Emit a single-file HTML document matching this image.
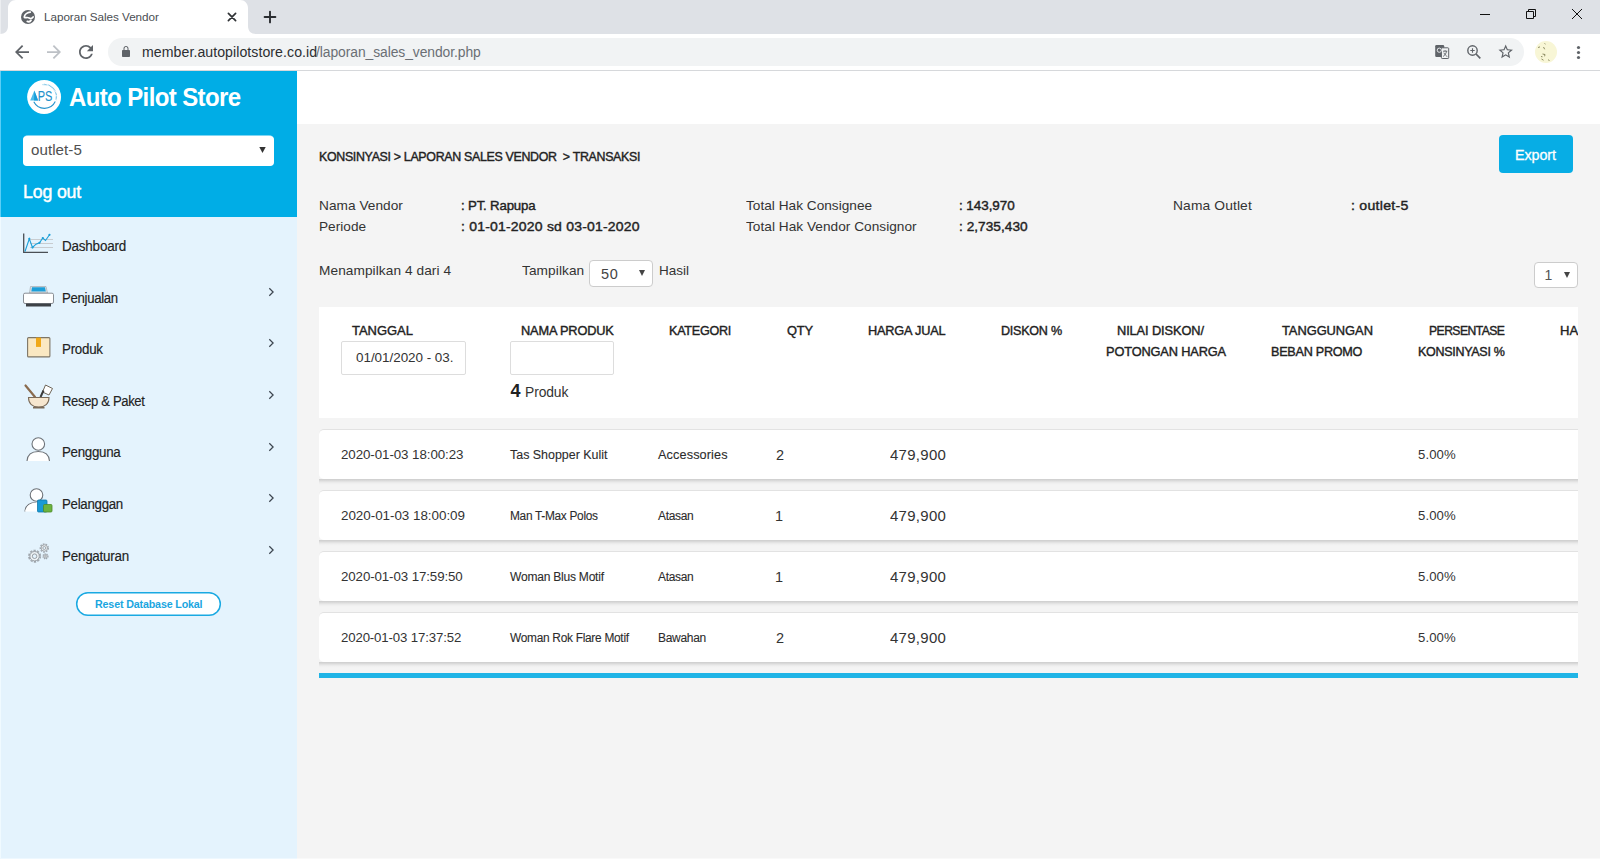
<!DOCTYPE html>
<html lang="id">
<head>
<meta charset="utf-8">
<title>Laporan Sales Vendor</title>
<style>
html,body{margin:0;padding:0}
body{width:1600px;height:859px;overflow:hidden;position:relative;background:#f4f4f4;font-family:"Liberation Sans",sans-serif}
.t{position:absolute;white-space:pre;transform-origin:0 0;font-family:"Liberation Sans",sans-serif}
.b{position:absolute;box-sizing:border-box}
svg{position:absolute;overflow:visible}
</style>
</head>
<body>
<div class="b" style="left:0;top:0;width:1600px;height:34px;background:#dee1e6;border-left:1px solid #eceef1"></div>
<div class="b" style="left:0;top:34px;width:1600px;height:37px;background:#fff;border-bottom:1px solid #d6d8db"></div>
<svg style="left:0;top:0" width="270" height="34" viewBox="0 0 270 34"><path d="M0 34 C5 34 8 31 8 26 L8 8 C8 3.5 11.5 0 16 0 L240 0 C244.5 0 248 3.5 248 8 L248 26 C248 31 251 34 256 34 Z" fill="#fff"/></svg>
<svg style="left:21px;top:10px" width="14" height="14" viewBox="0 0 14 14"><circle cx="7" cy="7" r="7" fill="#5f6368"/><path d="M9.300 2.100 C6.500 2.300 3.600 4.200 3.300 6.900 C3.200 8.200 4.800 7.600 6.200 7.500 C7.800 7.400 8.400 8.600 9.800 8.500 C11 8.400 11.800 7.600 12.200 6.900" stroke="#fff" stroke-width="1.700" stroke-linecap="round" fill="none"/><path d="M6.300 11.400 C7.500 11.900 9.300 11.500 10 10.300" stroke="#fff" stroke-width="1.800" stroke-linecap="round" fill="none"/></svg>
<span class="t" style="left:44.00px;top:10px;font-size:11.8px;line-height:14px;font-weight:400;color:#4a4e52;letter-spacing:-0.05px;transform:scaleX(0.9922);">Laporan Sales Vendor</span>
<svg style="left:227px;top:12px" width="10" height="10" viewBox="0 0 10 10"><path d="M1.400 1.400 L8.600 8.600 M8.600 1.400 L1.400 8.600" stroke="#303336" stroke-width="1.700" stroke-linecap="round" fill="none"/></svg>
<svg style="left:264px;top:11px" width="12" height="12" viewBox="0 0 12 12"><path d="M6 0.600 V11.400 M0.600 6 H11.400" stroke="#2a2d31" stroke-width="1.900" stroke-linecap="round" fill="none"/></svg>
<svg style="left:1479px;top:8px" width="110" height="12" viewBox="0 0 110 12"><path d="M1 6.5 H11" stroke="#111" stroke-width="1" fill="none"/><path d="M47.500 3.500 H54.500 V10.500 H47.500 Z M49.500 3.500 V1.500 H56.500 V8.500 H54.500" stroke="#111" stroke-width="1" fill="none"/><path d="M93 1 L103 11 M103 1 L93 11" stroke="#111" stroke-width="1" fill="none"/></svg>
<svg style="left:15px;top:45px" width="14" height="14" viewBox="4 4 16 16"><path fill="#5f6368" d="M20 11H7.830l5.590-5.590L12 4l-8 8 8 8 1.410-1.410L7.830 13H20v-2z"/></svg>
<svg style="left:47px;top:45px" width="14" height="14" viewBox="4 4 16 16"><path fill="#bdc1c6" d="M12 4l-1.410 1.410L16.170 11H4v2h12.170l-5.580 5.590L12 20l8-8z"/></svg>
<svg style="left:79px;top:45px" width="14" height="14" viewBox="4 4 16 16"><path fill="#5f6368" d="M17.650 6.350C16.200 4.900 14.210 4 12 4c-4.420 0-7.990 3.580-7.990 8s3.570 8 7.990 8c3.730 0 6.840-2.550 7.730-6h-2.080c-.82 2.330-3.040 4-5.650 4-3.310 0-6-2.690-6-6s2.690-6 6-6c1.660 0 3.140.69 4.220 1.780L13 11h7V4l-2.350 2.350z"/></svg>
<div class="b" style="left:108px;top:38px;width:1416px;height:28px;border-radius:14px;background:#f1f3f4"></div>
<svg style="left:120px;top:44.500px" width="12" height="14" viewBox="0 0 24 28"><path fill="#5f6368" d="M18 10h-1V7c0-2.760-2.240-5-5-5S7 4.240 7 7v3H6c-1.100 0-2 .9-2 2v10c0 1.100.9 2 2 2h12c1.100 0 2-.9 2-2V12c0-1.100-.9-2-2-2zM9 7c0-1.660 1.340-3 3-3s3 1.340 3 3v3H9V7z"/></svg>
<span class="t" style="left:142.00px;top:44px;font-size:14px;line-height:17px;font-weight:400;color:#2c2e31;letter-spacing:0.06px;transform:scaleX(1.0090);">member.autopilotstore.co.id</span>
<span class="t" style="left:316.00px;top:44px;font-size:14px;line-height:17px;font-weight:400;color:#6a6f74;letter-spacing:-0.07px;transform:scaleX(0.9900);">/laporan_sales_vendor.php</span>
<svg style="left:1435px;top:45px" width="16" height="15" viewBox="0 0 16 15"><rect x="0.200" y="0" width="9" height="12" rx="1.200" fill="#5f6368"/><rect x="6.400" y="2.800" width="7.300" height="10.700" rx="0.800" fill="#f1f3f4" stroke="#5f6368" stroke-width="1"/><path d="M8 6.200 H12.300 M10.100 5.200 V6.200 M11.600 6.200 C11.100 8.700 9.500 10.700 8.200 11.400 M8.900 7.700 C9.600 9.400 11 10.900 12.300 11.500" stroke="#5f6368" stroke-width="0.9" fill="none"/><circle cx="4.300" cy="5.200" r="2.100" fill="none" stroke="#e8eaed" stroke-width="1"/></svg>
<svg style="left:1466px;top:44px" width="16" height="16" viewBox="0 0 16 16"><circle cx="6.500" cy="6.500" r="4.700" fill="none" stroke="#5f6368" stroke-width="1.400"/><path d="M10 10 L14.300 14.300" stroke="#5f6368" stroke-width="1.700" fill="none"/><path d="M4.300 6.500 H8.700 M6.500 4.300 V8.700" stroke="#5f6368" stroke-width="1.100" fill="none"/></svg>
<svg style="left:1497.200px;top:43.200px" width="17.400" height="17.400" viewBox="0 0 24 24"><path fill="#5f6368" d="M22 9.240l-7.190-.62L12 2 9.190 8.630 2 9.240l5.460 4.730L5.820 21 12 17.270 18.180 21l-1.630-7.030L22 9.240zM12 15.400l-3.760 2.270 1-4.280-3.320-2.880 4.380-.38L12 6.100l1.710 4.040 4.380.38-3.320 2.880 1 4.280L12 15.400z"/></svg>
<svg style="left:1535px;top:41px" width="22" height="22" viewBox="0 0 22 22"><circle cx="11" cy="11" r="11" fill="#f8f6d6"/><path d="M9.500 2.500 l1 .6 M3 6.500 l2 -.6 M8.500 6 l1.200 2.300 M7.500 13 l2.500 .5 -.4 1.800 M6.500 18 l2 1.200 M13.500 18.500 l.8 1.500 M6 15.500 l1.500 .3" stroke="#6b6a3e" stroke-width="1" fill="none" opacity=".75"/></svg>
<svg style="left:1576px;top:45px" width="5" height="15" viewBox="0 0 5 15"><circle cx="2.500" cy="2.500" r="1.600" fill="#5f6368"/><circle cx="2.500" cy="7.500" r="1.600" fill="#5f6368"/><circle cx="2.500" cy="12.500" r="1.600" fill="#5f6368"/></svg>
<div class="b" style="left:297px;top:71px;width:1303px;height:53px;background:#fff"></div>
<div class="b" style="left:0;top:71px;width:297px;height:788px;background:#e4f3fd"></div>
<div class="b" style="left:0;top:71px;width:1px;height:788px;background:#f0faff"></div>
<div class="b" style="left:0;top:71px;width:1px;height:146px;background:#5bcef6"></div>
<div class="b" style="left:1px;top:71px;width:296px;height:146px;background:#00ade6"></div>
<svg style="left:27.300px;top:80px" width="34" height="34" viewBox="0 0 34 34"><circle cx="17.100" cy="17" r="16.950" fill="#fff"/><path d="M28.280 21.570 A12 12 0 0 1 6.800 21.800" fill="none" stroke="#2593cc" stroke-width="1.100"/><path d="M15.730 4.620 A12 12 0 0 1 28.880 20" fill="none" stroke="#2b9fd5" stroke-width="1.300" stroke-dasharray="0.600 0.700" opacity=".85"/><path d="M7.400 10.500 L3.200 20.500 L11.100 20.500 Z" fill="#4fbdea"/><path d="M7.400 10.500 L7.100 20.500 L11.100 20.500 Z" fill="#169cd9"/><text x="10.700" y="20.500" font-family="Liberation Sans, sans-serif" font-size="14" fill="#2191cb" stroke="#2191cb" stroke-width="0.150" textLength="14.600" lengthAdjust="spacingAndGlyphs">PS</text></svg>
<span class="t" style="left:69.30px;top:82px;font-size:25.4px;line-height:30px;font-weight:700;color:#fff;letter-spacing:-0.66px;transform:scaleX(0.9455);">Auto Pilot Store</span>
<div class="b" style="left:23px;top:135px;width:251px;height:31px;border-radius:5px;background:rgba(255,255,255,.5)"></div>
<div class="b" style="left:23px;top:136px;width:251px;height:29.500px;border-radius:4px;background:#fff"></div>
<span class="t" style="left:31.10px;top:141px;font-size:15px;line-height:18px;font-weight:400;color:#505050;letter-spacing:0.06px;transform:scaleX(1.0081);">outlet-5</span>
<svg style="left:259px;top:147px" width="7" height="6" viewBox="0 0 7 6"><path d="M0.300 0 H6.700 L3.500 6 Z" fill="#333"/></svg>
<span class="t" style="left:23.12px;top:181px;font-size:18px;line-height:22px;font-weight:400;color:#fff;letter-spacing:-0.15px;transform:scaleX(0.9840);-webkit-text-stroke:0.45px #fff;">Log out</span>
<span class="t" style="left:61.93px;top:238px;font-size:13.8px;line-height:17px;font-weight:400;color:#222;letter-spacing:-0.20px;transform:scaleX(0.9749);-webkit-text-stroke:0.15px #222;">Dashboard</span>
<span class="t" style="left:61.94px;top:290px;font-size:13.8px;line-height:17px;font-weight:400;color:#222;letter-spacing:-0.32px;transform:scaleX(0.9554);-webkit-text-stroke:0.15px #222;">Penjualan</span>
<svg style="left:268px;top:287.2px" width="7" height="10" viewBox="0 0 7 10"><path d="M1.300 1.300 L5.100 5 L1.300 8.700" stroke="#3d4650" stroke-width="1.250" fill="none"/></svg>
<span class="t" style="left:61.93px;top:341px;font-size:13.8px;line-height:17px;font-weight:400;color:#222;letter-spacing:-0.27px;transform:scaleX(0.9672);-webkit-text-stroke:0.15px #222;">Produk</span>
<svg style="left:268px;top:338.4px" width="7" height="10" viewBox="0 0 7 10"><path d="M1.300 1.300 L5.100 5 L1.300 8.700" stroke="#3d4650" stroke-width="1.250" fill="none"/></svg>
<span class="t" style="left:61.95px;top:393px;font-size:13.8px;line-height:17px;font-weight:400;color:#222;letter-spacing:-0.38px;transform:scaleX(0.9475);-webkit-text-stroke:0.15px #222;">Resep &amp; Paket</span>
<svg style="left:268px;top:390.1px" width="7" height="10" viewBox="0 0 7 10"><path d="M1.300 1.300 L5.100 5 L1.300 8.700" stroke="#3d4650" stroke-width="1.250" fill="none"/></svg>
<span class="t" style="left:61.93px;top:444px;font-size:13.8px;line-height:17px;font-weight:400;color:#222;letter-spacing:-0.30px;transform:scaleX(0.9656);-webkit-text-stroke:0.15px #222;">Pengguna</span>
<svg style="left:268px;top:441.7px" width="7" height="10" viewBox="0 0 7 10"><path d="M1.300 1.300 L5.100 5 L1.300 8.700" stroke="#3d4650" stroke-width="1.250" fill="none"/></svg>
<span class="t" style="left:61.94px;top:496px;font-size:13.8px;line-height:17px;font-weight:400;color:#222;letter-spacing:-0.29px;transform:scaleX(0.9620);-webkit-text-stroke:0.15px #222;">Pelanggan</span>
<svg style="left:268px;top:493.4px" width="7" height="10" viewBox="0 0 7 10"><path d="M1.300 1.300 L5.100 5 L1.300 8.700" stroke="#3d4650" stroke-width="1.250" fill="none"/></svg>
<span class="t" style="left:61.93px;top:548px;font-size:13.8px;line-height:17px;font-weight:400;color:#222;letter-spacing:-0.23px;transform:scaleX(0.9699);-webkit-text-stroke:0.15px #222;">Pengaturan</span>
<svg style="left:268px;top:545.0px" width="7" height="10" viewBox="0 0 7 10"><path d="M1.300 1.300 L5.100 5 L1.300 8.700" stroke="#3d4650" stroke-width="1.250" fill="none"/></svg>
<svg style="left:23px;top:233px" width="31" height="21" viewBox="0 0 31 21"><path d="M7 6.500 H30 M7 10.500 H30 M7 14.500 H30" stroke="#c8ccd0" stroke-width="1" fill="none"/><path d="M0.700 0.500 V19.300 H25" stroke="#4a4f55" stroke-width="1.300" fill="none"/><path d="M2 18.500 L6.300 5.800 L9.500 14.500 L13 11.200 L16.500 9.800 L19.800 5 L22.500 7.500 L26.500 1.800" stroke="#1a9fd8" stroke-width="1.100" fill="none"/><g fill="#1a9fd8"><circle cx="6.300" cy="5.800" r="1.100"/><circle cx="9.500" cy="14.500" r="1.100"/><circle cx="16.500" cy="9.800" r="1.100"/><circle cx="19.800" cy="5" r="1.100"/><circle cx="26.500" cy="1.800" r="1.100"/></g></svg>
<svg style="left:23px;top:286px" width="31" height="21" viewBox="0 0 31 21"><path d="M7.500 0.500 H23 L24.500 7 H6.500 Z" fill="#dfe3e6" stroke="#9aa0a6" stroke-width="0.600"/><path d="M9 1.200 H22 L22.800 5.500 H8.300 Z" fill="#1c9ed8"/><rect x="0.500" y="7.200" width="30" height="10.300" rx="1.500" fill="#fff" stroke="#8a8f95" stroke-width="1"/><rect x="3" y="17.500" width="25" height="3" fill="#3d4146"/></svg>
<svg style="left:27px;top:337px" width="24" height="21" viewBox="0 0 24 21"><rect x="0.600" y="0.600" width="22.300" height="19.300" rx="1" fill="#fae8c2" stroke="#7d7566" stroke-width="1.100"/><rect x="9" y="0.600" width="5" height="9.300" fill="#f0a818"/></svg>
<svg style="left:24px;top:384px" width="30" height="25" viewBox="0 0 30 25"><path d="M1.500 1.500 L11 13" stroke="#8a6b4e" stroke-width="2.200" stroke-linecap="round" fill="none"/><path d="M21.500 1 L28.500 4.500 L25 11 L18.500 8 Z" fill="#fff" stroke="#6e6558" stroke-width="1"/><path d="M19.500 6.500 L16.500 13" stroke="#3a3a3a" stroke-width="2" fill="none"/><path d="M4.500 13.500 H25 C25 19.500 21 23 14.700 23 C8.500 23 4.500 19.500 4.500 13.500 Z" fill="#f6e6cf" stroke="#7a6a58" stroke-width="1.100"/><path d="M9 23.700 H20.500" stroke="#7a6a58" stroke-width="1.600" fill="none"/></svg>
<svg style="left:26px;top:436px" width="25" height="26" viewBox="0 0 25 26"><circle cx="12.300" cy="8" r="6.300" fill="#fff" stroke="#6d7278" stroke-width="1.100"/><path d="M1 25 C1.500 18 6 15.500 12.300 15.500 C18.500 15.500 23 18 23.500 25" fill="#fff" stroke="#6d7278" stroke-width="1.100"/></svg>
<svg style="left:24px;top:487px" width="29" height="26" viewBox="0 0 29 26"><circle cx="12.500" cy="8" r="6.300" fill="#fff" stroke="#6d7278" stroke-width="1.100"/><path d="M1 24.500 C1.500 18 6 15.500 12.500 15.500" fill="#fff" stroke="#6d7278" stroke-width="1.100"/><path d="M1 24.500 C3 17 8 15.500 14 15.500 V24.500 Z" fill="#fff"/><rect x="13.500" y="13" width="9.500" height="12" rx="1" fill="#1a9ad6" stroke="#0f78aa" stroke-width="0.800"/><rect x="19.500" y="17.500" width="8.500" height="7.500" rx="1" fill="#6cb33f" stroke="#4c8a2a" stroke-width="0.800"/></svg>
<svg style="left:27px;top:541px" width="26" height="24" viewBox="0 0 26 24"><g fill="none" stroke="#90959b"><circle cx="7.600" cy="15.200" r="5.700" stroke-dasharray="2.300 1.280" stroke-width="1.700" opacity=".8"/><circle cx="7.600" cy="15.200" r="4.700" fill="#eef3f6" stroke-width="0.900"/><circle cx="7.600" cy="15.200" r="2.300" fill="#e4f3fd" stroke-width="0.900"/><circle cx="17.300" cy="7" r="4" stroke-dasharray="1.700 1.100" stroke-width="1.400" opacity=".8"/><circle cx="17.300" cy="7" r="3.200" fill="#eef3f6" stroke-width="0.800"/><circle cx="17.300" cy="7" r="1.500" fill="#e4f3fd" stroke-width="0.800"/><circle cx="18.500" cy="15.300" r="2.500" stroke-dasharray="1.200 0.900" stroke-width="1.200" opacity=".8"/><circle cx="18.500" cy="15.300" r="1.800" fill="#eef3f6" stroke-width="0.800"/><circle cx="18.500" cy="15.300" r="0.700" stroke-width="0.700"/></g></svg>
<svg style="left:75px;top:591px" width="147" height="26" viewBox="0 0 147 26"><rect x="1.700" y="1.750" width="143.600" height="22.500" rx="11.250" fill="#fff" stroke="#1aa9e2" stroke-width="1.500"/></svg>
<span class="t" style="left:95.00px;top:598px;font-size:11px;line-height:13px;font-weight:700;color:#1aa6df;letter-spacing:-0.16px;transform:scaleX(0.9721);">Reset Database Lokal</span>
<span class="t" style="left:318.75px;top:149px;font-size:13px;line-height:16px;font-weight:400;color:#222;letter-spacing:-0.34px;transform:scaleX(0.9544);-webkit-text-stroke:0.4px currentColor;">KONSINYASI &gt; LAPORAN SALES VENDOR  &gt; TRANSAKSI</span>
<div class="b" style="left:1499px;top:135px;width:74px;height:38px;border-radius:4px;background:#07ade5"></div>
<span class="t" style="left:1514.51px;top:147px;font-size:14.5px;line-height:17px;font-weight:400;color:#fff;letter-spacing:-0.09px;transform:scaleX(0.9891);-webkit-text-stroke:0.300px #fff;">Export</span>
<span class="t" style="left:318.70px;top:198px;font-size:13.6px;line-height:16px;font-weight:400;color:#333;letter-spacing:0.04px;transform:scaleX(1.0048);">Nama Vendor</span>
<span class="t" style="left:318.70px;top:219px;font-size:13.6px;line-height:16px;font-weight:400;color:#333;letter-spacing:0.02px;transform:scaleX(1.0023);">Periode</span>
<span class="t" style="left:460.93px;top:198px;font-size:13.6px;line-height:16px;font-weight:400;color:#222;letter-spacing:-0.18px;transform:scaleX(0.9735);-webkit-text-stroke:0.4px currentColor;">: PT. Rapupa</span>
<span class="t" style="left:460.87px;top:219px;font-size:13.6px;line-height:16px;font-weight:400;color:#222;letter-spacing:0.20px;transform:scaleX(1.0290);-webkit-text-stroke:0.4px currentColor;">: 01-01-2020 sd 03-01-2020</span>
<span class="t" style="left:746.00px;top:198px;font-size:13.6px;line-height:16px;font-weight:400;color:#333;letter-spacing:0.02px;transform:scaleX(1.0025);">Total Hak Consignee</span>
<span class="t" style="left:746.00px;top:219px;font-size:13.6px;line-height:16px;font-weight:400;color:#333;letter-spacing:0.03px;transform:scaleX(1.0037);">Total Hak Vendor Consignor</span>
<span class="t" style="left:959.41px;top:198px;font-size:13.6px;line-height:16px;font-weight:400;color:#222;letter-spacing:-0.06px;transform:scaleX(0.9907);-webkit-text-stroke:0.4px currentColor;">: 143,970</span>
<span class="t" style="left:959.40px;top:219px;font-size:13.6px;line-height:16px;font-weight:400;color:#222;letter-spacing:0.03px;transform:scaleX(1.0047);-webkit-text-stroke:0.4px currentColor;">: 2,735,430</span>
<span class="t" style="left:1172.98px;top:198px;font-size:13.6px;line-height:16px;font-weight:400;color:#333;letter-spacing:0.12px;transform:scaleX(1.0161);">Nama Outlet</span>
<span class="t" style="left:1350.86px;top:198px;font-size:13.6px;line-height:16px;font-weight:400;color:#222;letter-spacing:0.24px;transform:scaleX(1.0399);-webkit-text-stroke:0.4px currentColor;">: outlet-5</span>
<span class="t" style="left:318.69px;top:263px;font-size:13.5px;line-height:16px;font-weight:400;color:#333;letter-spacing:0.08px;transform:scaleX(1.0113);">Menampilkan 4 dari 4</span>
<span class="t" style="left:521.90px;top:263px;font-size:13.5px;line-height:16px;font-weight:400;color:#333;letter-spacing:0.09px;transform:scaleX(1.0117);">Tampilkan</span>
<div class="b" style="left:589px;top:260px;width:64px;height:27px;border-radius:4px;background:#fff;border:1px solid #ccc"></div>
<span class="t" style="left:601.10px;top:266px;font-size:14px;line-height:17px;font-weight:400;color:#444;letter-spacing:0.56px;transform:scaleX(1.0341);">50</span>
<svg style="left:639px;top:270px" width="6" height="6" viewBox="0 0 6 6"><path d="M0 0 H6 L3 6 Z" fill="#444"/></svg>
<span class="t" style="left:658.50px;top:263px;font-size:13.5px;line-height:16px;font-weight:400;color:#333;letter-spacing:-0.00px;transform:scaleX(0.9999);">Hasil</span>
<div class="b" style="left:1534px;top:262px;width:44px;height:26px;border-radius:4px;background:#fff;border:1px solid #ccc"></div>
<span class="t" style="left:1544.60px;top:267px;font-size:14px;line-height:17px;font-weight:400;color:#555;">1</span>
<svg style="left:1564px;top:271.500px" width="6" height="6" viewBox="0 0 6 6"><path d="M0 0 H6 L3 6 Z" fill="#444"/></svg>
<div class="b" style="left:319px;top:307px;width:1259px;height:111px;background:#fff"></div>
<span class="t" style="left:352.20px;top:323px;font-size:13px;line-height:16px;font-weight:400;color:#222;letter-spacing:-0.02px;transform:scaleX(0.9981);-webkit-text-stroke:0.4px currentColor;">TANGGAL</span>
<span class="t" style="left:520.72px;top:323px;font-size:13px;line-height:16px;font-weight:400;color:#222;letter-spacing:-0.16px;transform:scaleX(0.9830);-webkit-text-stroke:0.4px currentColor;">NAMA PRODUK</span>
<span class="t" style="left:668.63px;top:323px;font-size:13px;line-height:16px;font-weight:400;color:#222;letter-spacing:-0.28px;transform:scaleX(0.9689);-webkit-text-stroke:0.4px currentColor;">KATEGORI</span>
<span class="t" style="left:787.10px;top:323px;font-size:13px;line-height:16px;font-weight:400;color:#222;letter-spacing:-0.16px;transform:scaleX(0.9878);-webkit-text-stroke:0.4px currentColor;">QTY</span>
<span class="t" style="left:867.62px;top:323px;font-size:13px;line-height:16px;font-weight:400;color:#222;letter-spacing:-0.18px;transform:scaleX(0.9797);-webkit-text-stroke:0.4px currentColor;">HARGA JUAL</span>
<span class="t" style="left:1000.83px;top:323px;font-size:13px;line-height:16px;font-weight:400;color:#222;letter-spacing:-0.28px;transform:scaleX(0.9692);-webkit-text-stroke:0.4px currentColor;">DISKON %</span>
<span class="t" style="left:1116.81px;top:323px;font-size:13px;line-height:16px;font-weight:400;color:#222;letter-spacing:-0.11px;transform:scaleX(0.9854);-webkit-text-stroke:0.4px currentColor;">NILAI DISKON/</span>
<span class="t" style="left:1105.62px;top:344px;font-size:13px;line-height:16px;font-weight:400;color:#222;letter-spacing:-0.15px;transform:scaleX(0.9842);-webkit-text-stroke:0.4px currentColor;">POTONGAN HARGA</span>
<span class="t" style="left:1282.40px;top:323px;font-size:13px;line-height:16px;font-weight:400;color:#222;letter-spacing:-0.07px;transform:scaleX(0.9933);-webkit-text-stroke:0.4px currentColor;">TANGGUNGAN</span>
<span class="t" style="left:1270.73px;top:344px;font-size:13px;line-height:16px;font-weight:400;color:#222;letter-spacing:-0.27px;transform:scaleX(0.9711);-webkit-text-stroke:0.4px currentColor;">BEBAN PROMO</span>
<span class="t" style="left:1428.57px;top:323px;font-size:13px;line-height:16px;font-weight:400;color:#222;letter-spacing:-0.58px;transform:scaleX(0.9350);-webkit-text-stroke:0.4px currentColor;">PERSENTASE</span>
<span class="t" style="left:1417.64px;top:344px;font-size:13px;line-height:16px;font-weight:400;color:#222;letter-spacing:-0.31px;transform:scaleX(0.9626);-webkit-text-stroke:0.4px currentColor;">KONSINYASI %</span>
<span class="t" style="left:1560.39px;top:323px;font-size:13px;line-height:16px;font-weight:400;color:#222;letter-spacing:0.07px;transform:scaleX(1.0059);-webkit-text-stroke:0.4px currentColor;">HARGA</span>
<div class="b" style="left:1578px;top:307px;width:22px;height:111px;background:#f4f4f4"></div>
<div class="b" style="left:341px;top:341px;width:125px;height:34px;background:#fff;border:1px solid #ddd;border-radius:2px"></div>
<span class="t" style="left:356.00px;top:350px;font-size:13.5px;line-height:16px;font-weight:400;color:#333;letter-spacing:-0.03px;transform:scaleX(0.9960);">01/01/2020 - 03.</span>
<div class="b" style="left:510px;top:341px;width:104px;height:34px;background:#fff;border:1px solid #ddd;border-radius:2px"></div>
<span class="t" style="left:510.50px;top:380px;font-size:18px;line-height:22px;font-weight:700;color:#222;">4</span>
<span class="t" style="left:524.61px;top:384px;font-size:14px;line-height:17px;font-weight:400;color:#333;letter-spacing:-0.10px;transform:scaleX(0.9891);">Produk</span>
<div class="b" style="left:319px;top:420px;width:1259px;height:250px;overflow:hidden">
<div class="b" style="left:0;top:59px;width:1300px;height:6px;background:linear-gradient(to bottom,rgba(0,0,0,.16) 0,rgba(0,0,0,.13) 1px,rgba(0,0,0,.09) 2px,rgba(0,0,0,.05) 3px,rgba(0,0,0,.025) 4px,rgba(0,0,0,.008) 5px,rgba(0,0,0,0) 6px)"></div>
<div class="b" style="left:0;top:9px;width:1300px;height:50px;background:#fff;border-top:1px solid #e2e2e2;border-radius:5px 0 0 5px"></div>
<div class="b" style="left:0;top:120px;width:1300px;height:6px;background:linear-gradient(to bottom,rgba(0,0,0,.16) 0,rgba(0,0,0,.13) 1px,rgba(0,0,0,.09) 2px,rgba(0,0,0,.05) 3px,rgba(0,0,0,.025) 4px,rgba(0,0,0,.008) 5px,rgba(0,0,0,0) 6px)"></div>
<div class="b" style="left:0;top:70px;width:1300px;height:50px;background:#fff;border-top:1px solid #e2e2e2;border-radius:5px 0 0 5px"></div>
<div class="b" style="left:0;top:181px;width:1300px;height:6px;background:linear-gradient(to bottom,rgba(0,0,0,.16) 0,rgba(0,0,0,.13) 1px,rgba(0,0,0,.09) 2px,rgba(0,0,0,.05) 3px,rgba(0,0,0,.025) 4px,rgba(0,0,0,.008) 5px,rgba(0,0,0,0) 6px)"></div>
<div class="b" style="left:0;top:131px;width:1300px;height:50px;background:#fff;border-top:1px solid #e2e2e2;border-radius:5px 0 0 5px"></div>
<div class="b" style="left:0;top:242px;width:1300px;height:6px;background:linear-gradient(to bottom,rgba(0,0,0,.16) 0,rgba(0,0,0,.13) 1px,rgba(0,0,0,.09) 2px,rgba(0,0,0,.05) 3px,rgba(0,0,0,.025) 4px,rgba(0,0,0,.008) 5px,rgba(0,0,0,0) 6px)"></div>
<div class="b" style="left:0;top:192px;width:1300px;height:50px;background:#fff;border-top:1px solid #e2e2e2;border-radius:5px 0 0 5px"></div>
</div>
<span class="t" style="left:341.30px;top:447px;font-size:13.5px;line-height:16px;font-weight:400;color:#333;letter-spacing:-0.08px;transform:scaleX(0.9881);">2020-01-03 18:00:23</span>
<span class="t" style="left:510.00px;top:448px;font-size:12.5px;line-height:15px;font-weight:400;color:#2c2c2c;letter-spacing:-0.02px;transform:scaleX(0.9975);-webkit-text-stroke:0.1px #2c2c2c;">Tas Shopper Kulit</span>
<span class="t" style="left:658.20px;top:448px;font-size:12.5px;line-height:15px;font-weight:400;color:#2c2c2c;letter-spacing:0.11px;transform:scaleX(1.0159);-webkit-text-stroke:0.1px #2c2c2c;">Accessories</span>
<span class="t" style="left:776.10px;top:447px;font-size:14.5px;line-height:17px;font-weight:400;color:#333;">2</span>
<span class="t" style="left:890.00px;top:447px;font-size:14.5px;line-height:17px;font-weight:400;color:#333;letter-spacing:0.29px;transform:scaleX(1.0319);">479,900</span>
<span class="t" style="left:1418.10px;top:447px;font-size:13px;line-height:16px;font-weight:400;color:#333;letter-spacing:0.10px;transform:scaleX(1.0106);">5.00%</span>
<span class="t" style="left:341.30px;top:508px;font-size:13.5px;line-height:16px;font-weight:400;color:#333;letter-spacing:-0.04px;transform:scaleX(0.9946);">2020-01-03 18:00:09</span>
<span class="t" style="left:509.55px;top:509px;font-size:12.5px;line-height:15px;font-weight:400;color:#2c2c2c;letter-spacing:-0.32px;transform:scaleX(0.9508);-webkit-text-stroke:0.1px #2c2c2c;">Man T-Max Polos</span>
<span class="t" style="left:658.20px;top:509px;font-size:12.5px;line-height:15px;font-weight:400;color:#2c2c2c;letter-spacing:-0.32px;transform:scaleX(0.9577);-webkit-text-stroke:0.1px #2c2c2c;">Atasan</span>
<span class="t" style="left:775.10px;top:508px;font-size:14.5px;line-height:17px;font-weight:400;color:#333;">1</span>
<span class="t" style="left:890.00px;top:508px;font-size:14.5px;line-height:17px;font-weight:400;color:#333;letter-spacing:0.29px;transform:scaleX(1.0319);">479,900</span>
<span class="t" style="left:1418.10px;top:508px;font-size:13px;line-height:16px;font-weight:400;color:#333;letter-spacing:0.10px;transform:scaleX(1.0106);">5.00%</span>
<span class="t" style="left:341.30px;top:569px;font-size:13.5px;line-height:16px;font-weight:400;color:#333;letter-spacing:-0.10px;transform:scaleX(0.9852);">2020-01-03 17:59:50</span>
<span class="t" style="left:510.00px;top:570px;font-size:12.5px;line-height:15px;font-weight:400;color:#2c2c2c;letter-spacing:-0.24px;transform:scaleX(0.9632);-webkit-text-stroke:0.1px #2c2c2c;">Woman Blus Motif</span>
<span class="t" style="left:658.20px;top:570px;font-size:12.5px;line-height:15px;font-weight:400;color:#2c2c2c;letter-spacing:-0.32px;transform:scaleX(0.9577);-webkit-text-stroke:0.1px #2c2c2c;">Atasan</span>
<span class="t" style="left:775.10px;top:569px;font-size:14.5px;line-height:17px;font-weight:400;color:#333;">1</span>
<span class="t" style="left:890.00px;top:569px;font-size:14.5px;line-height:17px;font-weight:400;color:#333;letter-spacing:0.29px;transform:scaleX(1.0319);">479,900</span>
<span class="t" style="left:1418.10px;top:569px;font-size:13px;line-height:16px;font-weight:400;color:#333;letter-spacing:0.10px;transform:scaleX(1.0106);">5.00%</span>
<span class="t" style="left:341.30px;top:630px;font-size:13.5px;line-height:16px;font-weight:400;color:#333;letter-spacing:-0.14px;transform:scaleX(0.9789);">2020-01-03 17:37:52</span>
<span class="t" style="left:510.00px;top:631px;font-size:12.5px;line-height:15px;font-weight:400;color:#2c2c2c;letter-spacing:-0.30px;transform:scaleX(0.9519);-webkit-text-stroke:0.1px #2c2c2c;">Woman Rok Flare Motif</span>
<span class="t" style="left:657.74px;top:631px;font-size:12.5px;line-height:15px;font-weight:400;color:#2c2c2c;letter-spacing:-0.32px;transform:scaleX(0.9607);-webkit-text-stroke:0.1px #2c2c2c;">Bawahan</span>
<span class="t" style="left:776.10px;top:630px;font-size:14.5px;line-height:17px;font-weight:400;color:#333;">2</span>
<span class="t" style="left:890.00px;top:630px;font-size:14.5px;line-height:17px;font-weight:400;color:#333;letter-spacing:0.29px;transform:scaleX(1.0319);">479,900</span>
<span class="t" style="left:1418.10px;top:630px;font-size:13px;line-height:16px;font-weight:400;color:#333;letter-spacing:0.10px;transform:scaleX(1.0106);">5.00%</span>
<div class="b" style="left:319px;top:673px;width:1259px;height:5px;background:#1fb4e6"></div>
<div class="b" style="left:297px;top:858px;width:1303px;height:1px;background:#f9f9f9"></div>
<div class="b" style="left:0;top:858px;width:297px;height:1px;background:#eef8ff"></div>
</body>
</html>
